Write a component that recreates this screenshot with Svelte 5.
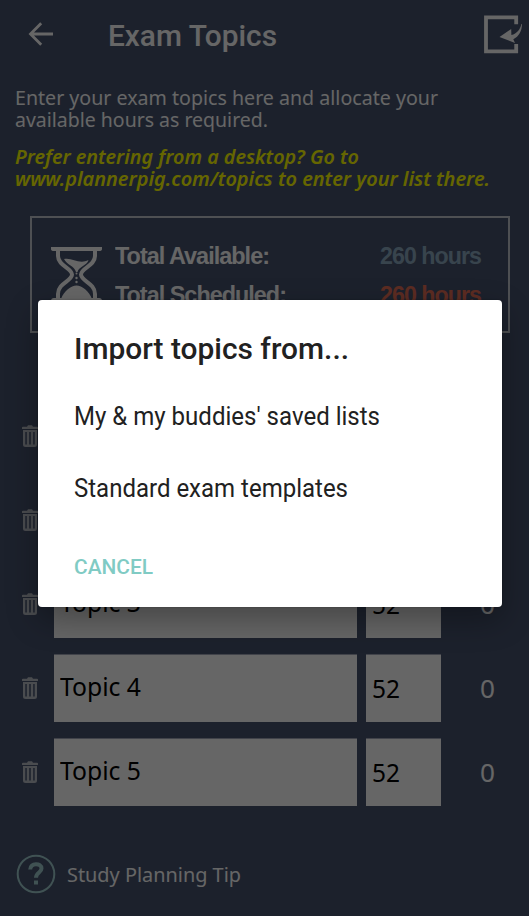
<script>
  const topics = [1, 2, 3, 4, 5].map((n) => ({ name: `Topic ${n}`, hours: 52, done: 0 }));

  // Condenses or widens a label so that it takes exactly the given width.
  function fit(node, width) {
    const natural = node.getBoundingClientRect().width;
    if (natural) node.style.transform = `scaleX(${width / natural})`;
  }
</script>

<main>
  <header>
    <svg class="back" width="26" height="26" viewBox="0 0 26 26">
      <path d="M25 13H3M13.2 2.3 2.5 13l10.7 10.7" />
    </svg>
    <h1><span use:fit={169}>Exam Topics</span></h1>
    <svg class="import" width="40" height="40" viewBox="0 0 40 40">
      <path class="frame" d="M32.2 9.2V2.4H2V36.4H32.2V29" />
      <path class="arrow" d="M37.4 9 38 9C37.8 16.5 35 21.3 29.3 24.3L31 28 15.500 22 27.200 14 27.400 20.100C33 18.500 36.300 14.500 37.400 9Z" />
    </svg>
  </header>

  <p class="intro">
    <span use:fit={423}>Enter your exam topics here and allocate your</span>
    <span use:fit={253}>available hours as required.</span>
  </p>
  <p class="intro hint">
    <span use:fit={344}>Prefer entering from a desktop? Go to</span>
    <span use:fit={475}>www.plannerpig.com/topics to enter your list there.</span>
  </p>

  <section class="summary">
    <svg class="glass" width="52" height="58" viewBox="0 0 52 58">
      <path class="solid" d="M0 1H51V3Q51 5 48 5H3Q0 5 0 3ZM3 52H48Q51 52 51 55V58H0V55Q0 52 3 52Z" />
      <path class="wall" d="M7 4V10C7 20 21 22 21 28.500S7 37 7 48V53M44 4V10C44 20 30 22 30 28.500S44 37 44 48V53" />
      <path class="solid" d="M13 13C21 11 28 19 37.500 14C36 20 28 20 26.500 26H25C23.500 20 16 19 13 13ZM10 53C13 45 20 39.500 25.500 39.500S38 45 41 53Z" />
      <circle cx="25.500" cy="27.500" r="1" /><circle cx="25.500" cy="32" r="1.200" /><circle cx="25.500" cy="36" r="1.200" />
    </svg>
    <div class="totals">
      <div><span use:fit={154}>Total Available:</span></div>
      <div><span use:fit={171}>Total Scheduled:</span></div>
    </div>
    <div class="amounts">
      <div class="available"><span use:fit={101}>260 hours</span></div>
      <div class="scheduled"><span use:fit={101}>260 hours</span></div>
    </div>
  </section>

  <ul>
    {#each topics as topic}
      <li>
        <svg class="trash" width="16" height="22" viewBox="0 0 16 22">
          <path d="M0 4V2.500Q0 1.700 1 1.700H5L6 0.300H10L11 1.700H15Q16 1.700 16 2.500V4Z" />
          <path fill-rule="evenodd" d="M1 5H15V19.500Q15 22 12.500 22H3.500Q1 22 1 19.500ZM3.300 7V19.500H4.800V7ZM7.200 7V19.500H8.800V7ZM11.200 7V19.500H12.700V7Z" />
        </svg>
        <div class="field name"><span use:fit={81}>{topic.name}</span></div>
        <div class="field hours"><span use:fit={28}>{topic.hours}</span></div>
        <div class="done"><span use:fit={15}>{topic.done}</span></div>
      </li>
    {/each}
  </ul>

  <footer>
    <svg class="help" width="40" height="40" viewBox="0 0 40 40">
      <circle cx="20" cy="20" r="18.300" />
      <path d="M14.200 15.600C14.200 8.500 25.500 8.500 25.500 14.600C25.500 18.700 20 18.400 20 23.700" />
      <path d="M20 26.500V30.500" />
    </svg>
    <span use:fit={174}>Study Planning Tip</span>
  </footer>

  <div class="scrim">
    <div class="dialog">
      <h2><span use:fit={275}>Import topics from...</span></h2>
      <div class="choice"><span use:fit={306}>My &amp; my buddies' saved lists</span></div>
      <div class="choice"><span use:fit={274}>Standard exam templates</span></div>
      <div class="cancel"><span use:fit={79}>CANCEL</span></div>
    </div>
  </div>
</main>

<style>
  main {
    position: relative;
    box-sizing: border-box;
    width: 529px;
    height: 916px;
    overflow: hidden;
    background: #46536f;
    color: #fff;
    font-family: "Noto Sans", sans-serif;
  }
  span {
    display: inline-block;
    white-space: nowrap;
    transform-origin: 0 50%;
  }
  svg { display: block; flex: none; }
  header {
    display: flex;
    align-items: center;
    height: 71px;
    padding-left: 28px;
  }
  .back { margin-bottom: 3px; fill: none; stroke: #fff; stroke-width: 2.8; }
  h1 {
    width: 376px;
    margin: 0 0 0 54px;
    font: 500 30px/40px Roboto, sans-serif;
  }
  .import { margin: 0 0 2px 0; }
  .frame { fill: none; stroke: #fff; stroke-width: 3.8; }
  .arrow { fill: #fff; }
  .intro {
    display: flex;
    flex-direction: column;
    align-items: flex-start;
    margin: 16px 0 0 15px;
    font-size: 20px;
    line-height: 22px;
  }
  .hint {
    margin-top: 15px;
    color: #ff0;
    font-weight: 600;
    font-style: italic;
  }
  .summary {
    display: flex;
    align-items: flex-start;
    box-sizing: border-box;
    width: 480px;
    height: 117px;
    margin: 26px 0 0 30px;
    padding: 18px 0 0 19px;
    border: 2px solid #c4c8d0;
    font: bold 24px/39px "Liberation Sans", sans-serif;
    letter-spacing: -1px;
  }
  .glass { margin-top: 10px; fill: #fff; }
  .wall { fill: none; stroke: #fff; stroke-width: 4; }
  .totals { width: 265px; margin-left: 12px; }
  .available { color: #8caac0; }
  .scheduled { color: #e66e55; }
  ul {
    display: flex;
    flex-direction: column;
    gap: 16px;
    margin: 69px 0 0;
    padding: 0 0 0 22px;
    list-style: none;
    font-size: 25px;
    line-height: 40px;
  }
  li { display: flex; align-items: center; height: 68px; }
  .trash { fill: #b9bdc6; }
  .field {
    display: flex;
    align-items: center;
    box-sizing: border-box;
    height: 68px;
    padding: 0 0 5px 6px;
    background: #fff;
    box-shadow: inset 0 1px #a2a8b8;
    color: #000;
  }
  .name { width: 303px; margin-left: 16px; }
  .hours { width: 75px; margin: 0 39px 0 9px; padding-bottom: 1px; }
  .done { padding-bottom: 1px; }
  footer {
    display: flex;
    align-items: center;
    gap: 11px;
    margin: 48px 0 0 16px;
    font-size: 20px;
    line-height: 26px;
  }
  footer span { padding-top: 2px; }
  .help { fill: none; stroke: #a0cdd0; stroke-width: 2; }
  .help path { stroke-width: 4; }
  .scrim {
    position: absolute;
    inset: 0;
    background: rgba(0, 0, 0, 0.6);
  }
  .dialog {
    box-sizing: border-box;
    width: 464px;
    height: 307px;
    margin: 300px 0 0 38px;
    padding: 29px 0 0 36px;
    border-radius: 4px;
    background: #fff;
    box-shadow: 0 12px 32px rgba(0, 0, 0, 0.32), 0 0 2px rgba(0, 0, 0, 0.3);
    color: #212121;
    font-family: Roboto, sans-serif;
  }
  h2 { margin: 0 0 12px; font-size: 30px; font-weight: 500; line-height: 40px; }
  .choice { height: 72px; font-size: 25px; line-height: 72px; }
  .cancel {
    margin-top: 22px;
    color: #80cbc4;
    font-size: 21px;
    font-weight: 500;
    line-height: 40px;
  }
</style>
